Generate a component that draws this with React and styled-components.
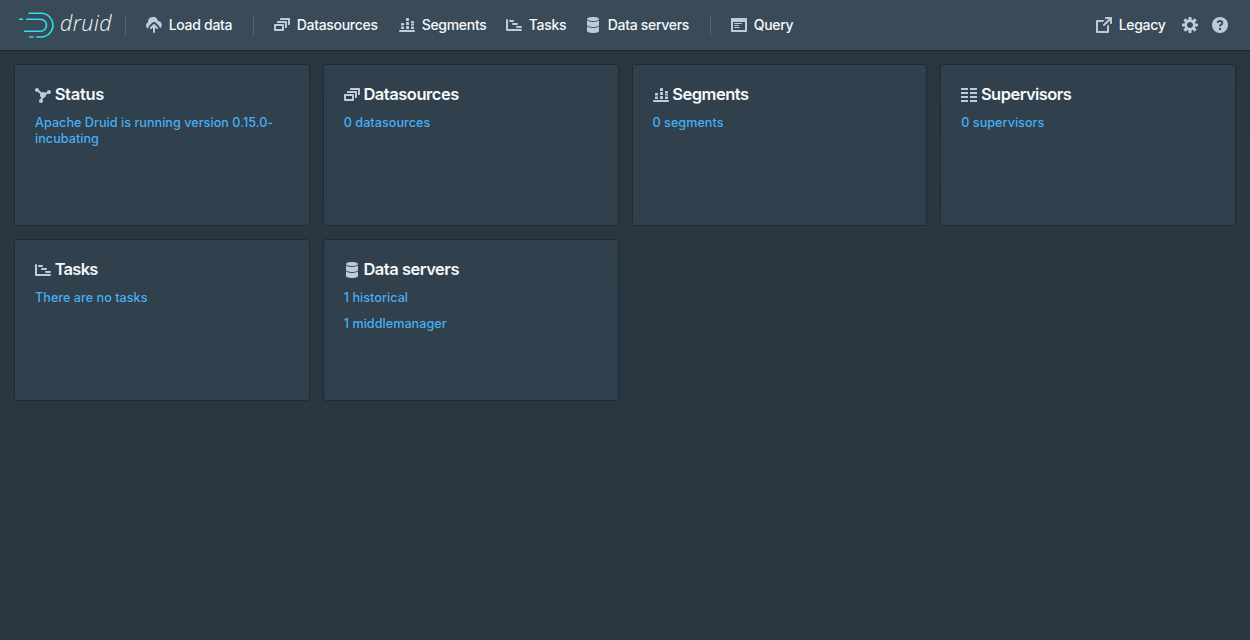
import React from 'react';
import styled, { createGlobalStyle } from 'styled-components';

const GlobalStyle = createGlobalStyle`
  * { box-sizing: border-box; }
  body {
    margin: 0;
    background: #293742;
    font-family: Inter, "Liberation Sans", sans-serif;
    color: #f5f8fa;
  }
`;

const Page = styled.div`
  min-height: 640px;
  background: linear-gradient(#29363f, #293743);
`;

const Header = styled.header`
  display: flex;
  align-items: center;
  justify-content: space-between;
  height: 51px;
  padding: 0 12px 1px 15px;
  background: #394b59;
  border-bottom: 1px solid #1e2a32;
`;

const Group = styled.div`
  display: flex;
  align-items: center;
`;

const Brand = styled.div`
  display: flex;
  align-items: center;
  width: 110px;
  height: 50px;
`;

const BrandName = styled.span`
  margin-left: 5px;
  padding-bottom: 4px;
  font: italic 300 21.5px/28px "Open Sans", sans-serif;
  letter-spacing: 0.45px;
`;

const Divider = styled.span`
  width: 1px;
  height: 20px;
  margin-right: 10px;
  background: #566673;
`;

const NavButton = styled.a`
  display: flex;
  align-items: center;
  width: ${(p) => p.$width}px;
  height: 30px;
  padding-left: ${(p) => p.$inset ?? 10}px;
  gap: 6.7px;
  font-size: 14px;
  font-weight: 500;
  line-height: 18px;
  letter-spacing: -0.3px;
  white-space: nowrap;
`;

const Glyph = styled.svg`
  display: block;
  flex: none;
  width: 16px;
  height: 16px;
  fill: #bfccd6;
`;

const Grid = styled.main`
  display: grid;
  grid-template-columns: repeat(4, 1fr);
  grid-auto-rows: 162px;
  gap: 13px;
  padding: 13px 14px;
`;

const Card = styled.section`
  padding: 20px;
  background: #30404d;
  border: 1px solid #1f2b33;
  border-radius: 3px;
`;

const CardTitle = styled.h5`
  display: flex;
  align-items: flex-start;
  gap: 3.7px;
  height: 19px;
  margin: 0 0 11px;
  font-size: 16.5px;
  font-weight: 600;
  line-height: 19px;
  letter-spacing: ${(p) => p.$track ?? -0.48}px;
  white-space: nowrap;

  svg { margin-top: 2px; }
`;

const CardLink = styled.a`
  display: block;
  margin-bottom: 10px;
  color: #48aff0;
  font-size: 12.6px;
  font-weight: 450;
  line-height: 16px;
  letter-spacing: 0.04px;
`;

const shapes = {
  upload: (
    <>
      <path d="M12 4h-.1A5 5 0 0 0 2 5v.33A3.5 3.5 0 0 0 2.1 11.7c.1-.8.4-1.5.8-2.8l3-3A3 3 0 0 1 8 5c.8 0 1.5.3 2.1.9l3 3c.5.6.8 1.2.8 1.9v.6A4 4 0 0 0 12 4z" />
      <path d="M8.71 7.29a1 1 0 0 0-1.42 0l-3 3a1 1 0 0 0 1.42 1.42L7 10.41V15a1 1 0 0 0 2 0v-4.59l1.29 1.3a1 1 0 0 0 1.42-1.42z" />
    </>
  ),
  datasources: (
    <path d="M12 3.98H4c-.55 0-1 .45-1 1v1h8v5h1c.55 0 1-.45 1-1v-5c0-.55-.45-1-1-1zm3-3H7c-.55 0-1 .45-1 1v1h8v5h1c.55 0 1-.45 1-1v-5c0-.55-.45-1-1-1zm-6 6H1c-.55 0-1 .45-1 1v5c0 .55.45 1 1 1h8c.55 0 1-.45 1-1v-5c0-.55-.45-1-1-1zm-1 5H2v-3h6v3z" />
  ),
  segments: (
    <>
      <rect x="0" y="13" width="16" height="2" rx=".9" />
      <rect x="2" y="6" width="3" height="2.5" rx=".5" />
      <rect x="2" y="9.5" width="3" height="2.5" rx=".5" />
      <rect x="7" y="1" width="3" height="3" rx=".5" />
      <rect x="7" y="5" width="3" height="3" rx=".5" />
      <rect x="7" y="9" width="3" height="3" rx=".5" />
      <rect x="12" y="4" width="3" height="2.5" rx=".5" />
      <rect x="12" y="7" width="3" height="1.6" rx=".4" />
      <rect x="12" y="9.4" width="3" height="2.6" rx=".5" />
    </>
  ),
  tasks: (
    <>
      <path d="M0 3a1 1 0 0 1 2 0v9h13a1 1 0 0 1 0 2H1a1 1 0 0 1-1-1z" />
      <rect x="3" y="3" width="5" height="1.9" rx=".8" />
      <rect x="6" y="6" width="6" height="1.9" rx=".8" />
      <rect x="10" y="9" width="6" height="1.9" rx=".8" />
    </>
  ),
  servers: (
    <path d="M8 4c3.31 0 6-.9 6-2s-2.69-2-6-2C4.68 0 2 .9 2 2s2.68 2 6 2zm-6-.48V8c0 1.1 2.69 2 6 2s6-.9 6-2V3.52C12.78 4.4 10.56 5 8 5s-4.78-.6-6-1.48zm0 6V14c0 1.1 2.69 2 6 2s6-.9 6-2V9.52C12.78 10.4 10.56 11 8 11s-4.78-.6-6-1.48z" />
  ),
  query: (
    <path d="M3.5 7h7c.28 0 .5-.22.5-.5s-.22-.5-.5-.5h-7c-.28 0-.5.22-.5.5s.22.5.5.5zM15 1H1c-.55 0-1 .45-1 1v12c0 .55.45 1 1 1h14c.55 0 1-.45 1-1V2c0-.55-.45-1-1-1zm-1 12H2V5h12v8zM3.5 9h4c.28 0 .5-.22.5-.5S7.78 8 7.5 8h-4c-.28 0-.5.22-.5.5s.22.5.5.5zm0 2h5c.28 0 .5-.22.5-.5s-.22-.5-.5-.5h-5c-.28 0-.5.22-.5.5s.22.5.5.5z" />
  ),
  legacy: (
    <path d="M10.99 13.99h-9v-9h4.76l2-2H.99c-.55 0-1 .45-1 1v11c0 .55.45 1 1 1h11c.55 0 1-.45 1-1V7.24l-2 2v4.75zm4-14h-5c-.55 0-1 .45-1 1s.45 1 1 1h2.59L7.29 7.28a1.003 1.003 0 001.42 1.42l5.29-5.29V6c0 .55.45 1 1 1s1-.45 1-1V.99c-.01-.55-.46-1-1.01-1z" />
  ),
  cog: (
    <path d="M15.19 6.39h-1.85c-.11-.37-.27-.71-.45-1.04l1.36-1.36c.31-.31.31-.82 0-1.13l-1.13-1.13c-.31-.31-.82-.31-1.13 0l-1.36 1.36c-.33-.17-.67-.33-1.04-.44V.79c0-.44-.36-.8-.8-.8h-1.6c-.44 0-.8.36-.8.8v1.86c-.39.12-.75.28-1.1.47l-1.3-1.3c-.3-.3-.79-.3-1.09 0L1.82 2.91c-.3.3-.3.79 0 1.09l1.3 1.3c-.2.34-.36.7-.48 1.09H.79c-.44 0-.8.36-.8.8v1.6c0 .44.36.8.8.8h1.85c.11.37.27.71.45 1.04l-1.36 1.36c-.31.31-.31.82 0 1.13l1.13 1.13c.31.31.82.31 1.13 0l1.36-1.36c.33.18.67.33 1.04.44v1.86c0 .44.36.8.8.8h1.6c.44 0 .8-.36.8-.8v-1.86c.39-.12.75-.28 1.1-.47l1.3 1.3c.3.3.79.3 1.09 0l1.09-1.09c.3-.3.3-.79 0-1.09l-1.3-1.3c.19-.35.36-.71.48-1.1h1.85c.44 0 .8-.36.8-.8v-1.6a.816.816 0 00-.81-.79zm-7.2 4.6c-1.66 0-3-1.34-3-3s1.34-3 3-3 3 1.34 3 3-1.34 3-3 3z" />
  ),
  help: (
    <>
      <circle cx="8" cy="8" r="8" />
      <path d="M5.7 5.9C5.8 4.6 6.8 4 8 4s2.3.7 2.3 1.9C10.3 7.5 8 7.6 8 9.5" fill="none" stroke="#394b59" strokeWidth="1.9" />
      <rect x="7" y="11" width="2" height="2" fill="#394b59" />
    </>
  ),
  status: (
    <path d="M14 3c-1.06 0-1.92.83-1.99 1.88l-1.93.97A2.95 2.95 0 008 5c-.56 0-1.08.16-1.52.43L3.97 3.34C3.98 3.23 4 3.12 4 3c0-1.1-.9-2-2-2s-2 .9-2 2 .9 2 2 2c.24 0 .47-.05.68-.13l2.51 2.09C5.08 7.29 5 7.63 5 8c0 .96.46 1.81 1.16 2.35l-.56 1.69c-.91.19-1.6.99-1.6 1.96 0 1.1.9 2 2 2s2-.9 2-2c0-.51-.2-.97-.51-1.32l.56-1.69C9.68 10.97 11 9.65 11 8c0-.11-.02-.22-.03-.32l1.94-.97C13.21 6.88 13.59 7 14 7c1.1 0 2-.9 2-2s-.9-2-2-2z" />
  ),
  supervisors: (
    <path d="M0 1h7v2H0zM0 5h7v2H0zM0 9h7v2H0zM0 13h7v2H0zM9 1h7v2H9zM9 5h7v2H9zM9 9h7v2H9zM9 13h7v2H9z" />
  ),
};

const Icon = ({ name }) => <Glyph viewBox="0 0 16 16">{shapes[name]}</Glyph>;

const Logo = () => (
  <svg width="40" height="32" viewBox="15 9 40 32" fill="none" stroke="#2ee0ee" strokeWidth="1.6" strokeLinecap="round">
    <path d="M29 13.3H41A11.8 11.8 0 0 1 41 37H36.7" />
    <path d="M29.8 37H33" />
    <path d="M26.7 19.3H40.5A6 6 0 0 1 40.5 31.3H24.5" />
    <path d="M19.7 19.3H22.5" />
  </svg>
);

const Nav = ({ icon, children, ...rest }) => (
  <NavButton {...rest}>
    <Icon name={icon} />
    {children && <span>{children}</span>}
  </NavButton>
);

const cards = [
  { icon: 'status', title: 'Status', track: -0.3, links: ['Apache Druid is running version 0.15.0-incubating'] },
  { icon: 'datasources', title: 'Datasources', links: ['0 datasources'] },
  { icon: 'segments', title: 'Segments', links: ['0 segments'] },
  { icon: 'supervisors', title: 'Supervisors', track: -0.55, links: ['0 supervisors'] },
  { icon: 'tasks', title: 'Tasks', track: -0.75, links: ['There are no tasks'] },
  { icon: 'servers', title: 'Data servers', links: ['1 historical', '1 middlemanager'] },
];

export default function App() {
  return (
    <Page>
      <GlobalStyle />
      <Header>
        <Group>
          <Brand>
            <Logo />
            <BrandName>druid</BrandName>
          </Brand>
          <Divider />
          <Nav icon="upload" $width={117}>Load data</Nav>
          <Divider />
          <Nav icon="datasources" $width={125}>Datasources</Nav>
          <Nav icon="segments" $width={107}>Segments</Nav>
          <Nav icon="tasks" $width={79}>Tasks</Nav>
          <Nav icon="servers" $width={135}>Data servers</Nav>
          <Divider />
          <Nav icon="query" $width={82}>Query</Nav>
        </Group>
        <Group>
          <Nav icon="legacy" $width={89}>Legacy</Nav>
          <Nav icon="cog" $width={30} $inset={7} />
          <Nav icon="help" $width={33} $inset={7} />
        </Group>
      </Header>
      <Grid>
        {cards.map((card) => (
          <Card key={card.title}>
            <CardTitle $track={card.track}>
              <Icon name={card.icon} />
              <span>{card.title}</span>
            </CardTitle>
            {card.links.map((link) => (
              <CardLink key={link}>{link}</CardLink>
            ))}
          </Card>
        ))}
      </Grid>
    </Page>
  );
}
